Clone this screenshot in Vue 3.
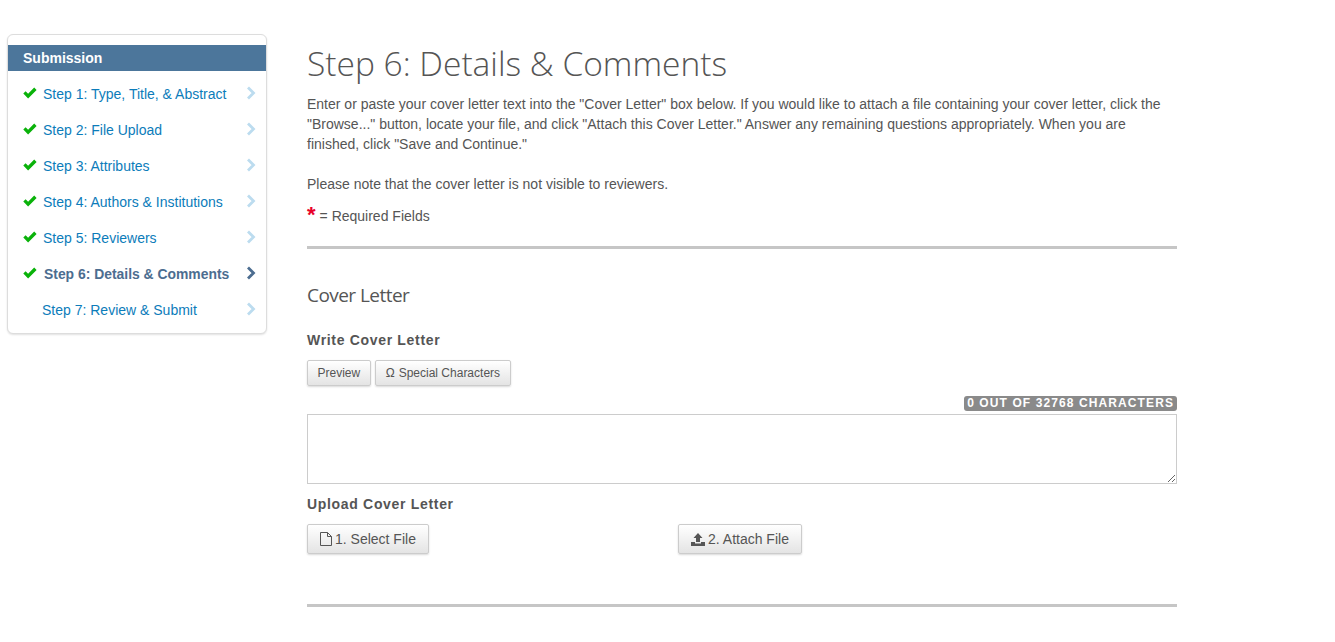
<script setup>
const steps = [
  { label: 'Step 1: Type, Title, & Abstract', done: true },
  { label: 'Step 2: File Upload', done: true },
  { label: 'Step 3: Attributes', done: true },
  { label: 'Step 4: Authors & Institutions', done: true },
  { label: 'Step 5: Reviewers', done: true },
  { label: 'Step 6: Details & Comments', done: true, active: true },
  { label: 'Step 7: Review & Submit', done: false }
];
</script>

<template>
  <div class="page">
    <aside class="sidebar">
      <div class="side-title">Submission</div>
      <ul class="steps">
        <li v-for="step in steps" :key="step.label" class="step" :class="{ active: step.active, todo: !step.done }">
          <svg v-if="step.done" class="check" viewBox="0 0 14 12" width="14" height="12">
            <path d="M0.3 6.6 L2.6 4.3 L5.1 6.8 L11.2 0.6 L13.6 3 L5.1 11.4 Z" fill="#0ab20a" />
          </svg>
          <span class="step-label">{{ step.label }}</span>
          <svg class="chev" viewBox="0 0 10 14" width="10" height="14">
            <path d="M2 1.5 L7.5 7 L2 12.5" fill="none" stroke="currentColor" stroke-width="2.8" />
          </svg>
        </li>
      </ul>
    </aside>

    <main class="content">
      <h1>Step 6: Details &amp; Comments</h1>
      <p class="intro">Enter or paste your cover letter text into the "Cover Letter" box below. If you would like to attach a file containing your cover letter, click the "Browse..." button, locate your file, and click "Attach this Cover Letter." Answer any remaining questions appropriately. When you are finished, click "Save and Continue."</p>
      <p class="note">Please note that the cover letter is not visible to reviewers.</p>
      <p class="required"><span class="star">*</span><span class="req-text">= Required Fields</span></p>
      <hr />

      <h2>Cover Letter</h2>
      <h3>Write Cover Letter</h3>
      <div class="small-btns">
        <button class="btn small preview">Preview</button>
        <button class="btn small"><span class="omega">Ω</span> Special Characters</button>
      </div>
      <div class="count-row"><span class="count">0 OUT OF 32768 CHARACTERS</span></div>
      <textarea class="letter"></textarea>

      <h3 class="upload-title">Upload Cover Letter</h3>
      <div class="upload">
        <div class="upload-col">
          <button class="btn">
            <svg viewBox="0 0 12 14" width="12" height="14">
              <path d="M0.5 0.5 H7.5 L11.5 4.5 V13.5 H0.5 Z M7.5 0.5 V4.5 H11.5" fill="none" stroke="#555" stroke-width="1" />
            </svg>
            1. Select File
          </button>
        </div>
        <div class="upload-col">
          <button class="btn">
            <svg viewBox="0 0 14 13" width="14" height="13">
              <path d="M7 0 L11.5 5 H9 V9 H5 V5 H2.5 Z" fill="#555" />
              <path d="M0 9 H4 V10.5 H10 V9 H14 V13 H0 Z" fill="#555" />
            </svg>
            2. Attach File
          </button>
        </div>
      </div>
      <hr class="last" />
    </main>
  </div>
</template>

<style scoped>
.page {
  display: flex;
  align-items: flex-start;
  padding-left: 7px;
  height: 642px;
  overflow: hidden;
  box-sizing: border-box;
  font-family: "Liberation Sans", Arial, sans-serif;
  font-size: 14px;
  line-height: 20px;
  color: #555;
}

.sidebar {
  width: 260px;
  box-sizing: border-box;
  margin-top: 34px;
  padding: 10px 0 5px;
  background: #fff;
  border: 1px solid #ddd;
  border-radius: 6px;
  box-shadow: 0 1px 2px rgba(0, 0, 0, 0.12);
}

.side-title {
  height: 26px;
  padding-left: 15px;
  background: #4c769b;
  color: #fff;
  font-weight: bold;
  font-size: 14px;
  line-height: 27px;
}

.steps {
  list-style: none;
  margin: 0;
  padding: 5px 0 0;
}

.step {
  display: flex;
  align-items: center;
  height: 36px;
  padding: 0 10px 0 15px;
  color: #0c7cba;
}

.check {
  flex: none;
  margin: -3px 6px 0 0;
}

.step-label {
  flex: 1;
}

.chev {
  flex: none;
  margin-top: -3px;
  color: #bcdcef;
}

.todo .step-label {
  padding-left: 19px;
}

.active .step-label {
  padding-left: 1px;
  font-weight: bold;
  font-size: 13.9px;
  color: #4c6d90;
}

.active .chev {
  color: #4c6d90;
}

.content {
  width: 870px;
  margin-left: 40px;
}

h1 {
  margin: 40px 0 0;
  font-family: "Open Sans", sans-serif;
  font-weight: 300;
  font-size: 33.5px;
  line-height: 46px;
  color: #555;
}

.intro,
.note {
  margin: 0;
}

.intro {
  margin-top: 8px;
}

.note {
  margin-top: 20px;
}

.required {
  display: flex;
  align-items: flex-start;
  margin: 12px 0 0;
}

.star {
  color: #e8002a;
  font-size: 22px;
  line-height: 20px;
  font-weight: bold;
  margin-top: -1px;
}

.req-text {
  margin-left: 4px;
}

hr {
  height: 3px;
  margin: 20px 0 0;
  border: 0;
  background: #c6c6c6;
}

h2 {
  margin: 33px 0 0;
  font-family: "Open Sans", sans-serif;
  font-weight: 400;
  font-size: 19px;
  line-height: 26px;
  letter-spacing: -0.55px;
  color: #555;
}

h3 {
  margin: 22px 0 0;
  font-size: 14px;
  line-height: 20px;
  letter-spacing: 0.68px;
  color: #555;
}

.small-btns {
  display: flex;
  gap: 4px;
  margin-top: 10px;
}

.btn {
  display: flex;
  align-items: center;
  gap: 3px;
  height: 30px;
  padding: 0 12px;
  border: 1px solid #ccc;
  border-radius: 2px;
  background: linear-gradient(#fff, #e4e4e4);
  box-shadow: 0 1px 2px rgba(0, 0, 0, 0.15);
  font-family: "Liberation Sans", Arial, sans-serif;
  font-size: 14px;
  color: #555;
}

.btn.small {
  height: 26px;
  padding: 0 10px;
  font-size: 12px;
}

.btn.preview {
  padding: 0 9.5px;
}

.omega {
  margin-right: 1px;
}

.count-row {
  display: flex;
  justify-content: flex-end;
  margin-top: 10px;
}

.count {
  padding: 0 3px;
  height: 15px;
  border-radius: 3px;
  background: #8a8a8a;
  color: #fff;
  font-size: 12px;
  font-weight: bold;
  line-height: 15px;
  letter-spacing: 1.1px;
}

.letter {
  display: block;
  width: 100%;
  height: 70px;
  box-sizing: border-box;
  margin-top: 3px;
  border: 1px solid #ccc;
  background: #fff;
  outline: none;
}

.upload-title {
  margin-top: 10px;
}

.upload {
  display: flex;
  margin-top: 10px;
}

.upload-col {
  width: 371px;
}

.last {
  margin-top: 50px;
}
</style>
